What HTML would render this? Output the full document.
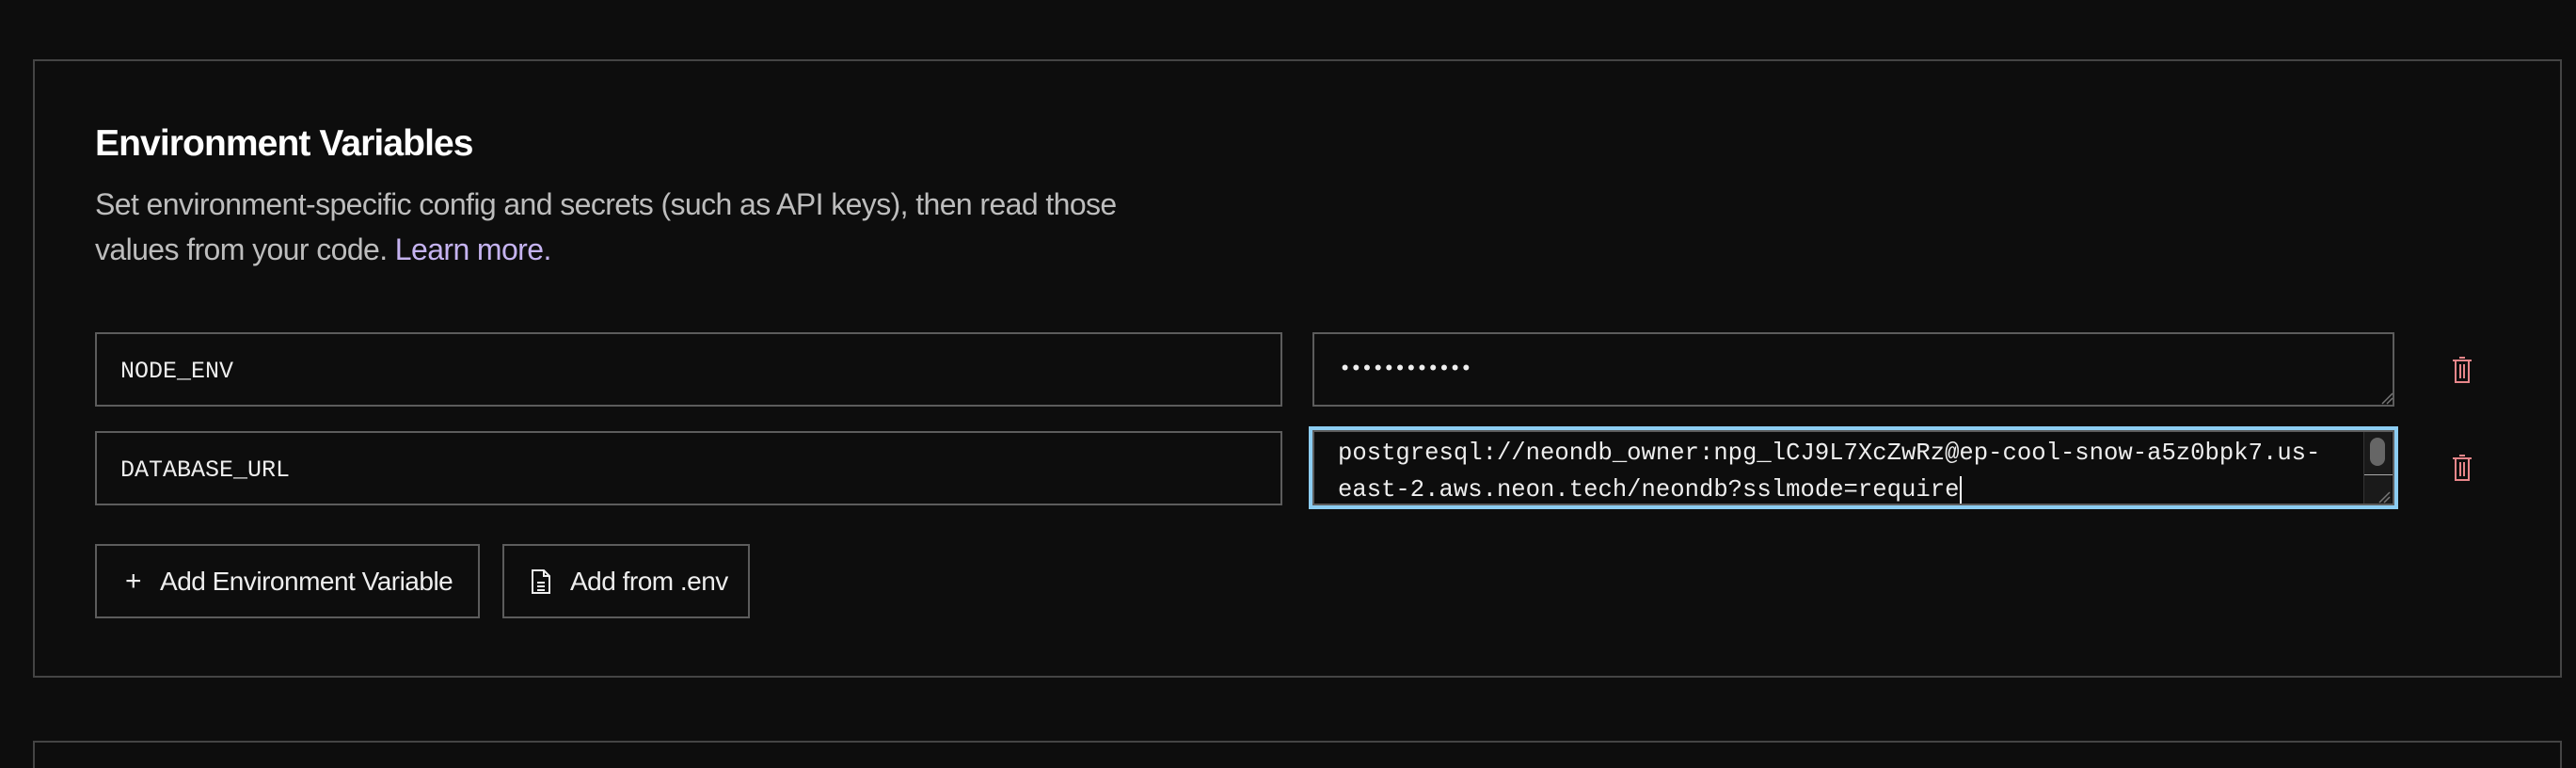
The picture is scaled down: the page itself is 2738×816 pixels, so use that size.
<!DOCTYPE html>
<html><head><meta charset="utf-8"><style>
*{box-sizing:border-box;margin:0;padding:0}
html,body{width:2738px;height:816px;overflow:hidden}
body{background:#0d0d0d;position:relative;font-family:"Liberation Sans",sans-serif;color:#ededed}
.box{position:absolute;border:2px solid #444}
.title{position:absolute;left:101px;top:131px;font-size:39px;font-weight:bold;color:#fff;letter-spacing:-0.9px}
.sub{position:absolute;left:101px;top:193px;font-size:32px;line-height:48px;color:#bdbdbd;letter-spacing:-0.6px;width:1300px}
.sub a{color:#c5b3f0;text-decoration:none}
.inp{position:absolute;border:2px solid #5c5c5c;background:#0d0d0d;font-family:"Liberation Mono",monospace;font-size:25px;color:#eee}
.btn{position:absolute;border:2px solid #5c5c5c;height:79px;top:578px;font-size:28px;color:#eee;letter-spacing:-0.5px;display:flex;align-items:center}
.trash{position:absolute;left:2605px}
</style></head><body>
<div class="box" style="left:35px;top:63px;width:2688px;height:657px"></div>
<div class="box" style="left:35px;top:787px;width:2688px;height:40px"></div>
<div class="title">Environment Variables</div>
<div class="sub">Set environment-specific config and secrets (such as API keys), then read those<br>values from your code. <a>Learn more.</a></div>

<div class="inp" style="left:101px;top:353px;width:1262px;height:79px;padding:25px 0 0 25px">NODE_ENV</div>
<div class="inp" style="left:101px;top:458px;width:1262px;height:79px;padding:25px 0 0 25px">DATABASE_URL</div>

<div class="inp" style="left:1395px;top:353px;width:1150px;height:79px;padding:25px 0 0 26px;font-size:22px;letter-spacing:-1.5px">••••••••••••</div>
<svg style="position:absolute;left:2530px;top:414px" width="14" height="16"><path d="M2 15L13 4M7 15L13 9" stroke="#777" stroke-width="1.5"/></svg>

<div style="position:absolute;left:1391px;top:453px;width:1158px;height:88px;border:4px solid #8ccdf2"></div>
<div class="inp" style="left:1395px;top:457px;width:1150px;height:80px;padding:3px 50px 0 25px;line-height:39px;font-size:25.6px;white-space:nowrap">postgresql://neondb_owner:npg_lCJ9L7XcZwRz@ep-cool-snow-a5z0bpk7.us-<br>east-2.aws.neon.tech/neondb?sslmode=require<span style="border-left:2px solid #fff;margin-left:1px"></span></div>
<div style="position:absolute;left:2512px;top:459px;width:30px;height:76px;background:#1a1a1a;border-left:1px solid #333">
<div style="position:absolute;left:6px;top:6px;width:16px;height:30px;border-radius:8px;background:#666"></div>
<div style="position:absolute;left:0;top:45px;width:30px;height:1px;background:#aaa"></div>
<svg style="position:absolute;left:14px;top:60px" width="14" height="16"><path d="M2 15L13 4M7 15L13 9" stroke="#777" stroke-width="1.5"/></svg>
</div>

<svg class="trash" style="top:378px" width="24" height="30" viewBox="0 0 24 30" fill="none" stroke="#e8868a" stroke-width="2"><path d="M9 2h6M2 5h20M5 5v23h14V5M10 9v15M14 9v15"/></svg>
<svg class="trash" style="top:482px" width="24" height="30" viewBox="0 0 24 30" fill="none" stroke="#e8868a" stroke-width="2"><path d="M9 2h6M2 5h20M5 5v23h14V5M10 9v15M14 9v15"/></svg>

<div class="btn" style="left:101px;width:409px;padding-left:30px"><span style="font-size:30px;margin-right:20px">+</span>Add Environment Variable</div>
<div class="btn" style="left:534px;width:263px;padding-left:28px">
<svg width="22" height="28" viewBox="0 0 22 28" fill="none" stroke="#eee" stroke-width="2" style="margin-right:20px"><path d="M2 2h12l6 6v18H2zM14 2v6h6M7 15h8M7 19h8M7 23h8"/></svg>Add from .env</div>
</body></html>
